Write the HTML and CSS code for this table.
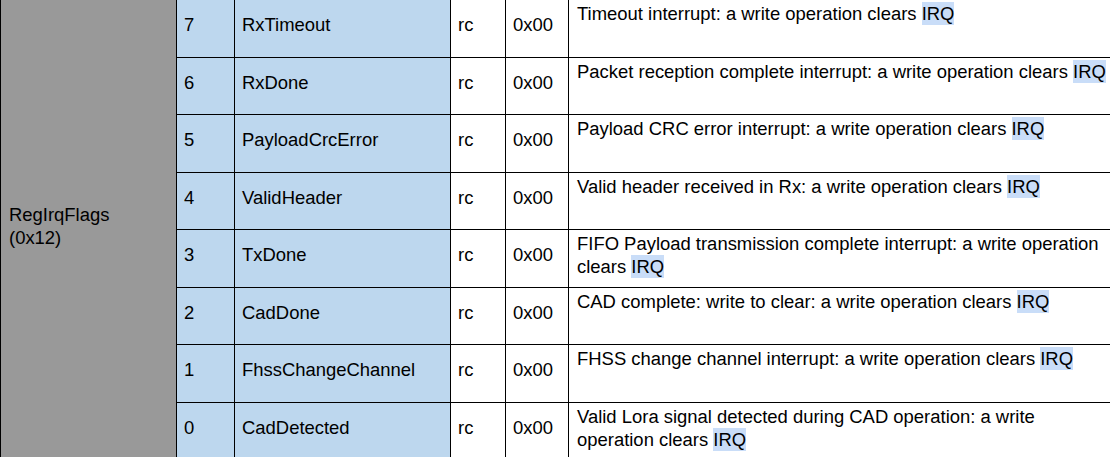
FILE: index.html
```html
<!DOCTYPE html>
<html lang="en">
<head>
<meta charset="utf-8">
<title>RegIrqFlags</title>
<link rel="stylesheet" href="styles.css">
</head>
<body>
<table class="reg-table">
  <colgroup>
    <col class="c-reg">
    <col class="c-bit">
    <col class="c-name">
    <col class="c-mode">
    <col class="c-reset">
    <col class="c-desc">
  </colgroup>
  <tbody>
    <tr class="row odd">
      <td class="reg" rowspan="8">RegIrqFlags<br>(0x12)</td>
      <td class="bit">7</td>
      <td class="name">RxTimeout</td>
      <td class="mode">rc</td>
      <td class="reset">0x00</td>
      <td class="desc">Timeout interrupt: a write operation clears <span class="hl">IRQ</span></td>
    </tr>
    <tr class="row even">
      <td class="bit">6</td>
      <td class="name">RxDone</td>
      <td class="mode">rc</td>
      <td class="reset">0x00</td>
      <td class="desc">Packet reception complete interrupt: a write operation clears <span class="hl">IRQ</span></td>
    </tr>
    <tr class="row odd">
      <td class="bit">5</td>
      <td class="name">PayloadCrcError</td>
      <td class="mode">rc</td>
      <td class="reset">0x00</td>
      <td class="desc">Payload CRC error interrupt: a write operation clears <span class="hl">IRQ</span></td>
    </tr>
    <tr class="row even">
      <td class="bit">4</td>
      <td class="name">ValidHeader</td>
      <td class="mode">rc</td>
      <td class="reset">0x00</td>
      <td class="desc">Valid header received in Rx: a write operation clears <span class="hl">IRQ</span></td>
    </tr>
    <tr class="row odd">
      <td class="bit">3</td>
      <td class="name">TxDone</td>
      <td class="mode">rc</td>
      <td class="reset">0x00</td>
      <td class="desc">FIFO Payload transmission complete interrupt: a write operation clears <span class="hl">IRQ</span></td>
    </tr>
    <tr class="row even">
      <td class="bit">2</td>
      <td class="name">CadDone</td>
      <td class="mode">rc</td>
      <td class="reset">0x00</td>
      <td class="desc">CAD complete: write to clear: a write operation clears <span class="hl">IRQ</span></td>
    </tr>
    <tr class="row odd">
      <td class="bit">1</td>
      <td class="name">FhssChangeChannel</td>
      <td class="mode">rc</td>
      <td class="reset">0x00</td>
      <td class="desc">FHSS change channel interrupt: a write operation clears <span class="hl">IRQ</span></td>
    </tr>
    <tr class="row even">
      <td class="bit">0</td>
      <td class="name">CadDetected</td>
      <td class="mode">rc</td>
      <td class="reset">0x00</td>
      <td class="desc">Valid Lora signal detected during CAD operation: a write operation clears <span class="hl">IRQ</span></td>
    </tr>
  </tbody>
</table>
</body>
</html>
```
FILE: styles.css
```css
html, body {
  margin: 0;
  padding: 0;
  background: #ffffff;
  overflow: hidden;
}

.reg-table {
  margin-top: -1px;
  border-collapse: separate;
  border-spacing: 0;
  table-layout: fixed;
  width: 1112px;
  border-left: 1px solid #000;
  border-top: 1px solid #000;
  font-family: "Liberation Sans", Arial, sans-serif;
  font-size: 18.45px;
  line-height: 23px;
  color: #000;
}

.c-reg { width: 176px; }
.c-bit { width: 58px; }
.c-name { width: 216px; }
.c-mode { width: 55px; }
.c-reset { width: 63px; }
.c-desc { width: 543px; }

.reg-table td {
  box-sizing: border-box;
  border-right: 1px solid #000;
  border-bottom: 1px solid #000;
  padding: 0 0 8px 7px;
  vertical-align: middle;
  white-space: nowrap;
}

.row.odd { height: 58px; }
.row.even { height: 57px; }

.reg-table td.reg {
  background: #999999;
  padding-left: 8px;
}

.reg-table td.bit,
.reg-table td.name {
  background: #bdd7ee;
}

.reg-table td.desc {
  vertical-align: top;
  white-space: normal;
  padding: 2px 0 0 8px;
}

.hl {
  display: inline-block;
  line-height: 23px;
  background: #c9ddf8;
}
```
